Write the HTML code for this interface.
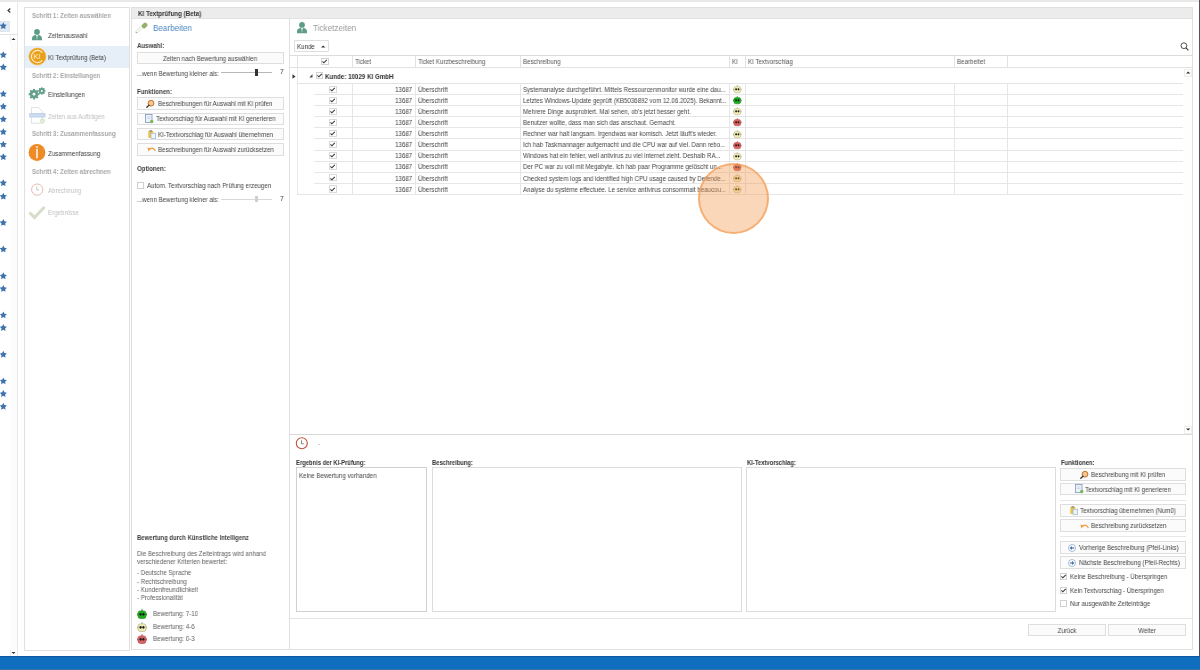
<!DOCTYPE html><html><head><meta charset="utf-8"><style>
html,body{margin:0;padding:0;}
body{width:1200px;height:670px;overflow:hidden;background:#fff;position:relative;font-family:"Liberation Sans",sans-serif;}
.a{position:absolute;}
.t{position:absolute;white-space:nowrap;will-change:transform;}
svg{overflow:visible}
</style></head><body>
<div class="a" style="left:0px;top:0px;width:1200px;height:2px;background:#e8e8e8"></div>
<div class="a" style="left:17px;top:2px;width:1px;height:654px;background:#e8e8e8"></div>
<div class="a" style="left:10px;top:42px;width:7px;height:607px;background:#fcfcfc"></div>
<div class="a" style="left:0px;top:20.5px;width:10px;height:11.5px;background:#e2ebf5;box-shadow:inset 0 0 0 0.5px #d5e0ec"></div>
<svg class="a" style="left:7px;top:8px" width="4" height="5" viewBox="0 0 4 5"><path d="M3.3 0.5 L1 2.5 L3.3 4.5" stroke="#333" stroke-width="1.1" fill="none"/></svg>
<div class="a" style="left:0px;top:34px;width:17px;height:1px;background:#e3e3e3"></div>
<div class="a" style="left:10px;top:35px;width:7px;height:7px;background:#fff;border-left:1px solid #eee;box-sizing:border-box"></div>
<svg class="a" style="left:11px;top:37px" width="5" height="4" viewBox="0 0 5 4"><path d="M0.5 3 L2.5 1 L4.5 3 Z" fill="#333"/></svg>
<div class="a" style="left:10px;top:649px;width:7px;height:7px;background:#fff;border-left:1px solid #eee;box-sizing:border-box"></div>
<svg class="a" style="left:11px;top:651px" width="5" height="4" viewBox="0 0 5 4"><path d="M0.5 1 L2.5 3 L4.5 1 Z" fill="#333"/></svg>
<svg class="a" style="left:0px;top:0px" width="17" height="420" viewBox="0 0 17 420"><polygon points="3.30,22.20 4.42,24.46 6.91,24.83 5.11,26.59 5.53,29.07 3.30,27.90 1.07,29.07 1.49,26.59 -0.31,24.83 2.18,24.46" fill="#3d72ad"/><polygon points="3.30,51.20 4.42,53.46 6.91,53.83 5.11,55.59 5.53,58.07 3.30,56.90 1.07,58.07 1.49,55.59 -0.31,53.83 2.18,53.46" fill="#3d72ad"/><polygon points="3.30,63.50 4.42,65.76 6.91,66.13 5.11,67.89 5.53,70.37 3.30,69.20 1.07,70.37 1.49,67.89 -0.31,66.13 2.18,65.76" fill="#3d72ad"/><polygon points="3.30,90.20 4.42,92.46 6.91,92.83 5.11,94.59 5.53,97.07 3.30,95.90 1.07,97.07 1.49,94.59 -0.31,92.83 2.18,92.46" fill="#3d72ad"/><polygon points="3.30,102.80 4.42,105.06 6.91,105.43 5.11,107.19 5.53,109.67 3.30,108.50 1.07,109.67 1.49,107.19 -0.31,105.43 2.18,105.06" fill="#3d72ad"/><polygon points="3.30,115.50 4.42,117.76 6.91,118.13 5.11,119.89 5.53,122.37 3.30,121.20 1.07,122.37 1.49,119.89 -0.31,118.13 2.18,117.76" fill="#3d72ad"/><polygon points="3.30,128.20 4.42,130.46 6.91,130.83 5.11,132.59 5.53,135.07 3.30,133.90 1.07,135.07 1.49,132.59 -0.31,130.83 2.18,130.46" fill="#3d72ad"/><polygon points="3.30,140.70 4.42,142.96 6.91,143.33 5.11,145.09 5.53,147.57 3.30,146.40 1.07,147.57 1.49,145.09 -0.31,143.33 2.18,142.96" fill="#3d72ad"/><polygon points="3.30,153.20 4.42,155.46 6.91,155.83 5.11,157.59 5.53,160.07 3.30,158.90 1.07,160.07 1.49,157.59 -0.31,155.83 2.18,155.46" fill="#3d72ad"/><polygon points="3.30,179.20 4.42,181.46 6.91,181.83 5.11,183.59 5.53,186.07 3.30,184.90 1.07,186.07 1.49,183.59 -0.31,181.83 2.18,181.46" fill="#3d72ad"/><polygon points="3.30,192.70 4.42,194.96 6.91,195.33 5.11,197.09 5.53,199.57 3.30,198.40 1.07,199.57 1.49,197.09 -0.31,195.33 2.18,194.96" fill="#3d72ad"/><polygon points="3.30,219.00 4.42,221.26 6.91,221.63 5.11,223.39 5.53,225.87 3.30,224.70 1.07,225.87 1.49,223.39 -0.31,221.63 2.18,221.26" fill="#3d72ad"/><polygon points="3.30,245.50 4.42,247.76 6.91,248.13 5.11,249.89 5.53,252.37 3.30,251.20 1.07,252.37 1.49,249.89 -0.31,248.13 2.18,247.76" fill="#3d72ad"/><polygon points="3.30,272.30 4.42,274.56 6.91,274.93 5.11,276.69 5.53,279.17 3.30,278.00 1.07,279.17 1.49,276.69 -0.31,274.93 2.18,274.56" fill="#3d72ad"/><polygon points="3.30,285.00 4.42,287.26 6.91,287.63 5.11,289.39 5.53,291.87 3.30,290.70 1.07,291.87 1.49,289.39 -0.31,287.63 2.18,287.26" fill="#3d72ad"/><polygon points="3.30,311.40 4.42,313.66 6.91,314.03 5.11,315.79 5.53,318.27 3.30,317.10 1.07,318.27 1.49,315.79 -0.31,314.03 2.18,313.66" fill="#3d72ad"/><polygon points="3.30,324.10 4.42,326.36 6.91,326.73 5.11,328.49 5.53,330.97 3.30,329.80 1.07,330.97 1.49,328.49 -0.31,326.73 2.18,326.36" fill="#3d72ad"/><polygon points="3.30,350.80 4.42,353.06 6.91,353.43 5.11,355.19 5.53,357.67 3.30,356.50 1.07,357.67 1.49,355.19 -0.31,353.43 2.18,353.06" fill="#3d72ad"/><polygon points="3.30,377.40 4.42,379.66 6.91,380.03 5.11,381.79 5.53,384.27 3.30,383.10 1.07,384.27 1.49,381.79 -0.31,380.03 2.18,379.66" fill="#3d72ad"/><polygon points="3.30,390.10 4.42,392.36 6.91,392.73 5.11,394.49 5.53,396.97 3.30,395.80 1.07,396.97 1.49,394.49 -0.31,392.73 2.18,392.36" fill="#3d72ad"/><polygon points="3.30,402.80 4.42,405.06 6.91,405.43 5.11,407.19 5.53,409.67 3.30,408.50 1.07,409.67 1.49,407.19 -0.31,405.43 2.18,405.06" fill="#3d72ad"/></svg>
<div class="a" style="left:24px;top:7px;width:106px;height:644px;border:1px solid #e0e0e0;box-sizing:border-box;background:#fff"></div>
<div class="a" style="left:25px;top:46px;width:104px;height:21.5px;background:#e6eff8"></div>
<div class="t" style="left:31.5px;top:11.10px;font-size:6.85px;color:#a6a6a6;line-height:10px;transform-origin:0 50%;transform:scaleX(0.891);font-weight:bold;">Schritt 1: Zeiten auswählen</div>
<div class="t" style="left:48px;top:30.60px;font-size:6.9px;color:#404040;line-height:10px;transform-origin:0 50%;transform:scaleX(0.891);">Zeitenauswahl</div>
<div class="t" style="left:48px;top:52.60px;font-size:6.9px;color:#404040;line-height:10px;transform-origin:0 50%;transform:scaleX(0.891);">KI Textprüfung (Beta)</div>
<div class="t" style="left:31.5px;top:70.60px;font-size:6.85px;color:#a6a6a6;line-height:10px;transform-origin:0 50%;transform:scaleX(0.891);font-weight:bold;">Schritt 2: Einstellungen</div>
<div class="t" style="left:48px;top:89.60px;font-size:6.9px;color:#404040;line-height:10px;transform-origin:0 50%;transform:scaleX(0.891);">Einstellungen</div>
<div class="t" style="left:48px;top:111.60px;font-size:6.9px;color:#c0c0c0;line-height:10px;transform-origin:0 50%;transform:scaleX(0.891);">Zeiten aus Aufträgen</div>
<div class="t" style="left:31.5px;top:129.10px;font-size:6.85px;color:#a6a6a6;line-height:10px;transform-origin:0 50%;transform:scaleX(0.891);font-weight:bold;">Schritt 3: Zusammenfassung</div>
<div class="t" style="left:48px;top:148.60px;font-size:6.9px;color:#404040;line-height:10px;transform-origin:0 50%;transform:scaleX(0.891);">Zusammenfassung</div>
<div class="t" style="left:31.5px;top:166.60px;font-size:6.85px;color:#a6a6a6;line-height:10px;transform-origin:0 50%;transform:scaleX(0.891);font-weight:bold;">Schritt 4: Zeiten abrechnen</div>
<div class="t" style="left:48px;top:185.60px;font-size:6.9px;color:#c0c0c0;line-height:10px;transform-origin:0 50%;transform:scaleX(0.891);">Abrechnung</div>
<div class="t" style="left:48px;top:207.60px;font-size:6.9px;color:#c0c0c0;line-height:10px;transform-origin:0 50%;transform:scaleX(0.891);">Ergebnisse</div>
<svg class="a" style="left:32px;top:29px" width="10" height="12" viewBox="0 0 10 12"><g transform="translate(0,0)"><circle cx="5" cy="2.9" r="2.9" fill="#5e9c89"/><path d="M0 11.2 L0 9.6 C0 7.2 1.8 6.2 3.7 6.0 L5 7.6 L6.3 6.0 C8.2 6.2 10 7.2 10 9.6 L10 11.2 Z" fill="#5e9c89"/><path d="M4.5 7.1 L5 6.6 L5.5 7.1 L5.25 10.2 L4.75 10.2 Z" fill="#cfe6dc"/></g></svg>
<svg class="a" style="left:28px;top:47px" width="19" height="19" viewBox="0 0 19 19"><circle cx="9.4" cy="9.5" r="8.5" fill="#e99e1c" stroke="#f3b84a" stroke-width="0.7"/><path d="M14.2 5.6 A6.1 6.1 0 1 0 14.2 13.4" stroke="#fff0c8" stroke-width="1.15" fill="none"/><text x="9.0" y="12.4" font-size="7.4" font-family="Liberation Sans" fill="#fff0c8" text-anchor="middle">KI</text></svg>
<svg class="a" style="left:28px;top:85px" width="18" height="16" viewBox="0 0 18 16"><circle cx="6" cy="9.2" r="4.134" fill="#64a08c"/><rect x="4.94" y="3.90" width="2.12" height="2.65" fill="#64a08c" transform="rotate(0.0 6 9.2)"/><rect x="4.94" y="3.90" width="2.12" height="2.65" fill="#64a08c" transform="rotate(45.0 6 9.2)"/><rect x="4.94" y="3.90" width="2.12" height="2.65" fill="#64a08c" transform="rotate(90.0 6 9.2)"/><rect x="4.94" y="3.90" width="2.12" height="2.65" fill="#64a08c" transform="rotate(135.0 6 9.2)"/><rect x="4.94" y="3.90" width="2.12" height="2.65" fill="#64a08c" transform="rotate(180.0 6 9.2)"/><rect x="4.94" y="3.90" width="2.12" height="2.65" fill="#64a08c" transform="rotate(225.0 6 9.2)"/><rect x="4.94" y="3.90" width="2.12" height="2.65" fill="#64a08c" transform="rotate(270.0 6 9.2)"/><rect x="4.94" y="3.90" width="2.12" height="2.65" fill="#64a08c" transform="rotate(315.0 6 9.2)"/><circle cx="6" cy="9.2" r="1.378" fill="#fff"/><circle cx="13.8" cy="6" r="2.886" fill="#64a08c"/><rect x="13.06" y="2.30" width="1.48" height="1.85" fill="#64a08c" transform="rotate(0.0 13.8 6)"/><rect x="13.06" y="2.30" width="1.48" height="1.85" fill="#64a08c" transform="rotate(45.0 13.8 6)"/><rect x="13.06" y="2.30" width="1.48" height="1.85" fill="#64a08c" transform="rotate(90.0 13.8 6)"/><rect x="13.06" y="2.30" width="1.48" height="1.85" fill="#64a08c" transform="rotate(135.0 13.8 6)"/><rect x="13.06" y="2.30" width="1.48" height="1.85" fill="#64a08c" transform="rotate(180.0 13.8 6)"/><rect x="13.06" y="2.30" width="1.48" height="1.85" fill="#64a08c" transform="rotate(225.0 13.8 6)"/><rect x="13.06" y="2.30" width="1.48" height="1.85" fill="#64a08c" transform="rotate(270.0 13.8 6)"/><rect x="13.06" y="2.30" width="1.48" height="1.85" fill="#64a08c" transform="rotate(315.0 13.8 6)"/><circle cx="13.8" cy="6" r="0.9620000000000001" fill="#fff"/></svg>
<svg class="a" style="left:29px;top:107px" width="17" height="17" viewBox="0 0 17 17"><path d="M2.5 0.5 H9.5 L13.5 4.5 V16.2 H2.5 Z" fill="#fff" stroke="#d6d6d6" stroke-width="0.7"/><rect x="0.2" y="6" width="16.3" height="4.5" fill="#c2d3ec"/><path d="M1.5 8.2 H15" stroke="#e9f0fa" stroke-width="0.8" stroke-dasharray="1.6 0.6"/><circle cx="13.5" cy="14" r="2.4" fill="#d3e6c6"/><path d="M12.3 14 H14.7 M13.5 12.8 V15.2" stroke="#f4faf0" stroke-width="0.6"/></svg>
<svg class="a" style="left:28px;top:144px" width="18" height="18" viewBox="0 0 18 18"><circle cx="9" cy="8.5" r="8.4" fill="#ee8b26"/><rect x="8.3" y="4.8" width="1.4" height="9.5" fill="#fff"/><rect x="8.2" y="2.2" width="1.6" height="1.6" fill="#fff"/></svg>
<svg class="a" style="left:30px;top:183px" width="14" height="14" viewBox="0 0 14 14"><circle cx="7.2" cy="6.6" r="5.6" fill="none" stroke="#e9b8b0" stroke-width="1"/><path d="M6.8 3.5 V7 H9" stroke="#b8b8b8" stroke-width="0.8" fill="none"/></svg>
<svg class="a" style="left:28px;top:205px" width="18" height="15" viewBox="0 0 18 15"><path d="M1.5 7.5 L6.5 12.5 L16.5 2" stroke="#d6ddc9" stroke-width="3" fill="none"/></svg>
<div class="a" style="left:131px;top:7px;width:1062px;height:643px;border:1px solid #e0e0e0;box-sizing:border-box;background:#fff"></div>
<div class="a" style="left:132px;top:8px;width:1060px;height:10.5px;background:#ececec;border-bottom:1px solid #e2e2e2;box-sizing:border-box"></div>
<div class="t" style="left:138px;top:9.10px;font-size:7.01px;color:#333;line-height:10px;transform-origin:0 50%;transform:scaleX(0.891);font-weight:bold;">KI Textprüfung (Beta)</div>
<div class="a" style="left:289px;top:18.5px;width:1px;height:631px;background:#e0e0e0"></div>
<svg class="a" style="left:135px;top:21px" width="13" height="13" viewBox="0 0 13 13"><path d="M1.8 11.0 L7.2 5.8" stroke="#cdd6c2" stroke-width="2.8" stroke-linecap="round"/><path d="M1.8 11.0 L7.2 5.8" stroke="#fff" stroke-width="1.6" stroke-linecap="round"/><circle cx="1.3" cy="11.5" r="0.55" fill="#8aa070"/><rect x="-2.9" y="-2.2" width="5.8" height="4.4" rx="1.6" transform="translate(9.6 4.5) rotate(-45)" fill="#93b06f"/></svg>
<div class="t" style="left:153px;top:23.10px;font-size:9.09px;color:#4a86c1;line-height:10px;transform-origin:0 50%;transform:scaleX(0.891);">Bearbeiten</div>
<div class="t" style="left:137.3px;top:41.30px;font-size:6.85px;color:#404040;line-height:10px;transform-origin:0 50%;transform:scaleX(0.891);font-weight:bold;">Auswahl:</div>
<div class="a" style="left:137.3px;top:52px;width:146.3px;height:12.299999999999997px;border:1px solid #dedede;box-sizing:border-box;background:#fbfbfb"></div>
<div class="t" style="left:210.45px;top:54.00px;font-size:6.9px;color:#444;line-height:10px;transform-origin:0 50%;transform:scaleX(0.891) translateX(-50%);">Zeiten nach Bewertung auswählen</div>
<div class="t" style="left:137.3px;top:68.90px;font-size:6.9px;color:#444;line-height:10px;transform-origin:0 50%;transform:scaleX(0.891);">...wenn Bewertung kleiner als:</div>
<div class="a" style="left:220.7px;top:72.3px;width:51.5px;height:0.8px;background:#b8b8b8"></div>
<div class="a" style="left:254.7px;top:69.4px;width:3px;height:6.3px;background:#333"></div>
<div class="t" style="left:280.4px;top:67.30px;font-size:6.9px;color:#444;line-height:10px;transform-origin:0 50%;transform:scaleX(0.891);">7</div>
<div class="t" style="left:137.3px;top:86.60px;font-size:6.85px;color:#404040;line-height:10px;transform-origin:0 50%;transform:scaleX(0.891);font-weight:bold;">Funktionen:</div>
<div class="a" style="left:137.3px;top:97px;width:146.3px;height:12.5px;border:1px solid #dedede;box-sizing:border-box;background:#fbfbfb"></div>
<div class="t" style="left:157.7px;top:98.90px;font-size:6.9px;color:#444;line-height:10px;transform-origin:0 50%;transform:scaleX(0.891);">Beschreibungen für Auswahl mit KI prüfen</div>
<div class="a" style="left:137.3px;top:112.5px;width:146.3px;height:12.5px;border:1px solid #dedede;box-sizing:border-box;background:#fbfbfb"></div>
<div class="t" style="left:155.7px;top:114.40px;font-size:6.9px;color:#444;line-height:10px;transform-origin:0 50%;transform:scaleX(0.891);">Textvorschlag für Auswahl mit KI generieren</div>
<div class="a" style="left:137.3px;top:127.8px;width:146.3px;height:12.600000000000009px;border:1px solid #dedede;box-sizing:border-box;background:#fbfbfb"></div>
<div class="t" style="left:157.6px;top:129.70px;font-size:6.9px;color:#444;line-height:10px;transform-origin:0 50%;transform:scaleX(0.891);">KI-Textvorschlag für Auswahl übernehmen</div>
<div class="a" style="left:137.3px;top:143.2px;width:146.3px;height:12.400000000000006px;border:1px solid #dedede;box-sizing:border-box;background:#fbfbfb"></div>
<div class="t" style="left:157.6px;top:145.00px;font-size:6.9px;color:#444;line-height:10px;transform-origin:0 50%;transform:scaleX(0.891);">Beschreibungen für Auswahl zurücksetzen</div>
<svg class="a" style="left:146px;top:99.5px" width="9" height="8" viewBox="0 0 9 8"><g transform="translate(0,0)"><circle cx="5" cy="3.2" r="2.9" fill="#f7c58f" stroke="#b86a20" stroke-width="0.9"/><path d="M3 5.2 L0.8 7.2" stroke="#333" stroke-width="1.3" stroke-linecap="round"/></g></svg>
<svg class="a" style="left:145px;top:114px" width="9" height="10" viewBox="0 0 9 10"><g transform="translate(0,0)"><rect x="0.5" y="0.5" width="6.5" height="8" fill="#eef3fa" stroke="#7d97c0" stroke-width="0.8"/><path d="M2 3 H5.5 M2 4.5 H5.5" stroke="#b8c6dc" stroke-width="0.6"/><circle cx="6.7" cy="7.5" r="1.7" fill="#7cb65a"/></g></svg>
<svg class="a" style="left:147.5px;top:129.8px" width="9" height="9" viewBox="0 0 9 9"><g transform="translate(0,0)"><rect x="0.3" y="1" width="5" height="7" fill="#e9c44a"/><rect x="1.5" y="0.2" width="2.6" height="1.5" fill="#8d8d8d"/><rect x="3" y="3.2" width="4.7" height="5.3" fill="#eef4fb" stroke="#8eaad0" stroke-width="0.6"/></g></svg>
<svg class="a" style="left:147px;top:146.3px" width="9" height="6" viewBox="0 0 9 6"><g transform="translate(0,0)"><path d="M8.3 5.2 C7.6 2.0 4.6 1.4 2.6 3.2" stroke="#ef9c45" stroke-width="1.3" fill="none"/><path d="M0.4 1.6 L4.0 2.6 L1.4 5.4 Z" fill="#ef9c45"/></g></svg>
<div class="t" style="left:137.3px;top:163.60px;font-size:6.85px;color:#404040;line-height:10px;transform-origin:0 50%;transform:scaleX(0.891);font-weight:bold;">Optionen:</div>
<div class="a" style="left:137.2px;top:182.4px;width:7.3px;height:6.6px;border:1px solid #cfcfcf;box-sizing:border-box;background:#fff"></div>
<div class="t" style="left:146.7px;top:181.40px;font-size:6.9px;color:#444;line-height:10px;transform-origin:0 50%;transform:scaleX(0.891);">Autom. Textvorschlag nach Prüfung erzeugen</div>
<div class="t" style="left:137.3px;top:195.20px;font-size:6.9px;color:#444;line-height:10px;transform-origin:0 50%;transform:scaleX(0.891);">...wenn Bewertung kleiner als:</div>
<div class="a" style="left:220.7px;top:198.8px;width:51.5px;height:0.8px;background:#d8d8d8"></div>
<div class="a" style="left:254.7px;top:196px;width:3px;height:6.3px;background:#cfcfcf"></div>
<div class="t" style="left:280.4px;top:193.60px;font-size:6.9px;color:#444;line-height:10px;transform-origin:0 50%;transform:scaleX(0.891);">7</div>
<div class="t" style="left:137.2px;top:532.80px;font-size:6.68px;color:#404040;line-height:10px;transform-origin:0 50%;transform:scaleX(0.891);font-weight:bold;">Bewertung durch Künstliche Intelligenz</div>
<div class="t" style="left:137.2px;top:549.10px;font-size:6.9px;color:#606060;line-height:10px;transform-origin:0 50%;transform:scaleX(0.891);">Die Beschreibung des Zeiteintrags wird anhand</div>
<div class="t" style="left:137.2px;top:557.30px;font-size:6.9px;color:#606060;line-height:10px;transform-origin:0 50%;transform:scaleX(0.891);">verschiedener Kriterien bewertet:</div>
<div class="t" style="left:137.2px;top:568.20px;font-size:6.9px;color:#606060;line-height:10px;transform-origin:0 50%;transform:scaleX(0.891);">- Deutsche Sprache</div>
<div class="t" style="left:137.2px;top:576.60px;font-size:6.9px;color:#606060;line-height:10px;transform-origin:0 50%;transform:scaleX(0.891);">- Rechtschreibung</div>
<div class="t" style="left:137.2px;top:585.00px;font-size:6.9px;color:#606060;line-height:10px;transform-origin:0 50%;transform:scaleX(0.891);">- Kundenfreundlichkeit</div>
<div class="t" style="left:137.2px;top:593.30px;font-size:6.9px;color:#606060;line-height:10px;transform-origin:0 50%;transform:scaleX(0.891);">- Professionalität</div>
<svg class="a" style="left:137.3px;top:609px" width="10" height="10" viewBox="0 0 10 10"><g transform="translate(0,0)"><path d="M5 0.2 V2" stroke="#138013" stroke-width="0.9"/><rect x="0.2" y="4.2" width="1.2" height="2.4" rx="0.5" fill="#138013"/><rect x="8.6" y="4.2" width="1.2" height="2.4" rx="0.5" fill="#138013"/><rect x="1.1" y="1.9" width="7.8" height="7.6" rx="2.2" fill="#1fae1f" stroke="#138013" stroke-width="0.6"/><ellipse cx="3.6" cy="5.3" rx="1.1" ry="1.4" fill="#1a1a1a"/><ellipse cx="6.4" cy="5.3" rx="1.1" ry="1.4" fill="#1a1a1a"/></g></svg>
<svg class="a" style="left:137.3px;top:621.6px" width="10" height="10" viewBox="0 0 10 10"><g transform="translate(0,0)"><path d="M5 0.2 V2" stroke="#aaa680" stroke-width="0.9"/><rect x="0.2" y="4.2" width="1.2" height="2.4" rx="0.5" fill="#aaa680"/><rect x="8.6" y="4.2" width="1.2" height="2.4" rx="0.5" fill="#aaa680"/><rect x="1.1" y="1.9" width="7.8" height="7.6" rx="2.2" fill="#f1efb6" stroke="#aaa680" stroke-width="0.6"/><ellipse cx="3.6" cy="5.3" rx="1.1" ry="1.4" fill="#1a1a1a"/><ellipse cx="6.4" cy="5.3" rx="1.1" ry="1.4" fill="#1a1a1a"/></g></svg>
<svg class="a" style="left:137.3px;top:634px" width="10" height="10" viewBox="0 0 10 10"><g transform="translate(0,0)"><path d="M5 0.2 V2" stroke="#a84444" stroke-width="0.9"/><rect x="0.2" y="4.2" width="1.2" height="2.4" rx="0.5" fill="#a84444"/><rect x="8.6" y="4.2" width="1.2" height="2.4" rx="0.5" fill="#a84444"/><rect x="1.1" y="1.9" width="7.8" height="7.6" rx="2.2" fill="#de6262" stroke="#a84444" stroke-width="0.6"/><ellipse cx="3.6" cy="5.3" rx="1.1" ry="1.4" fill="#1a1a1a"/><ellipse cx="6.4" cy="5.3" rx="1.1" ry="1.4" fill="#1a1a1a"/></g></svg>
<div class="t" style="left:152.9px;top:609.20px;font-size:6.9px;color:#606060;line-height:10px;transform-origin:0 50%;transform:scaleX(0.891);">Bewertung: 7-10</div>
<div class="t" style="left:152.9px;top:621.80px;font-size:6.9px;color:#606060;line-height:10px;transform-origin:0 50%;transform:scaleX(0.891);">Bewertung: 4-6</div>
<div class="t" style="left:152.9px;top:634.10px;font-size:6.9px;color:#606060;line-height:10px;transform-origin:0 50%;transform:scaleX(0.891);">Bewertung: 0-3</div>
<svg class="a" style="left:297px;top:21.5px" width="10" height="12" viewBox="0 0 10 12"><g transform="translate(0,0)"><circle cx="5" cy="2.9" r="2.9" fill="#5e9c89"/><path d="M0 11.2 L0 9.6 C0 7.2 1.8 6.2 3.7 6.0 L5 7.6 L6.3 6.0 C8.2 6.2 10 7.2 10 9.6 L10 11.2 Z" fill="#5e9c89"/><path d="M4.5 7.1 L5 6.6 L5.5 7.1 L5.25 10.2 L4.75 10.2 Z" fill="#cfe6dc"/></g></svg>
<div class="t" style="left:312.5px;top:23.40px;font-size:9.15px;color:#9a9a9a;line-height:10px;transform-origin:0 50%;transform:scaleX(0.891);">Ticketzeiten</div>
<div class="a" style="left:293.7px;top:40.2px;width:35px;height:11.4px;border:1px solid #dedede;box-sizing:border-box;background:#fff;border-radius:1px"></div>
<div class="t" style="left:296.5px;top:41.60px;font-size:6.9px;color:#333;line-height:10px;transform-origin:0 50%;transform:scaleX(0.891);">Kunde</div>
<svg class="a" style="left:321px;top:44.5px" width="5" height="3" viewBox="0 0 5 3"><path d="M0 2.6 L2.2 0.4 L4.4 2.6 Z" fill="#333"/></svg>
<svg class="a" style="left:1179.5px;top:41.5px" width="10" height="10" viewBox="0 0 10 10"><circle cx="3.9" cy="3.7" r="2.9" stroke="#3a3a3a" stroke-width="0.9" fill="none"/><path d="M6 5.9 L8.4 8.3" stroke="#3a3a3a" stroke-width="1.1"/></svg>
<div class="a" style="left:289.5px;top:55px;width:903px;height:1px;background:#dcdcdc"></div>
<div class="a" style="left:289.5px;top:67px;width:903px;height:1px;background:#e2e2e2"></div>
<div class="a" style="left:297.3px;top:56px;width:1px;height:11px;background:#e2e2e2"></div>
<div class="a" style="left:352.2px;top:56px;width:1px;height:11px;background:#e2e2e2"></div>
<div class="a" style="left:415.2px;top:56px;width:1px;height:11px;background:#e2e2e2"></div>
<div class="a" style="left:520.4px;top:56px;width:1px;height:11px;background:#e2e2e2"></div>
<div class="a" style="left:729.4px;top:56px;width:1px;height:11px;background:#e2e2e2"></div>
<div class="a" style="left:745.3px;top:56px;width:1px;height:11px;background:#e2e2e2"></div>
<div class="a" style="left:954.3px;top:56px;width:1px;height:11px;background:#e2e2e2"></div>
<div class="a" style="left:1007.3px;top:56px;width:1px;height:11px;background:#e2e2e2"></div>
<div class="a" style="left:321.4px;top:58px;width:7.3px;height:7px;border:1px solid #d2d2d2;box-sizing:border-box;background:#fff"></div>
<svg class="a" style="left:321.4px;top:58px" width="7.3" height="7" viewBox="0 0 7.3 7"><path d="M1.4 3.4 L2.9 4.8 L5.8 1.8" stroke="#3a3a3a" stroke-width="1.1" fill="none"/></svg>
<div class="t" style="left:355px;top:57.30px;font-size:6.9px;color:#555;line-height:10px;transform-origin:0 50%;transform:scaleX(0.891);">Ticket</div>
<div class="t" style="left:418px;top:57.30px;font-size:6.9px;color:#555;line-height:10px;transform-origin:0 50%;transform:scaleX(0.891);">Ticket Kurzbeschreibung</div>
<div class="t" style="left:522.7px;top:57.30px;font-size:6.9px;color:#555;line-height:10px;transform-origin:0 50%;transform:scaleX(0.891);">Beschreibung</div>
<div class="t" style="left:732px;top:57.30px;font-size:6.9px;color:#555;line-height:10px;transform-origin:0 50%;transform:scaleX(0.891);">KI</div>
<div class="t" style="left:747.5px;top:57.30px;font-size:6.9px;color:#555;line-height:10px;transform-origin:0 50%;transform:scaleX(0.891);">KI Textvorschlag</div>
<div class="t" style="left:957px;top:57.30px;font-size:6.9px;color:#555;line-height:10px;transform-origin:0 50%;transform:scaleX(0.891);">Bearbeitet</div>
<div class="a" style="left:297.3px;top:68px;width:1px;height:127px;background:#e8e8e8"></div>
<svg class="a" style="left:291.5px;top:73.5px" width="4" height="5" viewBox="0 0 4 5"><path d="M0.5 0.3 L3.5 2.5 L0.5 4.7 Z" fill="#333"/></svg>
<svg class="a" style="left:308.5px;top:74px" width="4" height="4" viewBox="0 0 4 4"><path d="M3.5 0.3 V3.5 H0.3 Z" fill="#444"/></svg>
<div class="a" style="left:315.5px;top:72px;width:7.2px;height:7px;border:1px solid #d2d2d2;box-sizing:border-box;background:#fff"></div>
<svg class="a" style="left:315.5px;top:72px" width="7.2" height="7" viewBox="0 0 7.2 7"><path d="M1.4 3.4 L2.9 4.8 L5.8 1.8" stroke="#3a3a3a" stroke-width="1.1" fill="none"/></svg>
<div class="t" style="left:325px;top:71.80px;font-size:6.96px;color:#303030;line-height:10px;transform-origin:0 50%;transform:scaleX(0.891);font-weight:bold;">Kunde: 10029 KI GmbH</div>
<div class="a" style="left:297.3px;top:83px;width:886px;height:1px;background:#e4e4e4"></div>
<div class="a" style="left:313.7px;top:94.0px;width:869.8px;height:1px;background:#e6e6e6"></div>
<div class="a" style="left:329.3px;top:85.5px;width:7.5px;height:7.2px;border:1px solid #d9d9d9;border-radius:0.5px;box-sizing:border-box;background:#fff"></div>
<svg class="a" style="left:329.3px;top:85.7px" width="7.5" height="7.2" viewBox="0 0 7.5 7.2"><path d="M1.4 3.4 L2.9 4.8 L5.8 1.8" stroke="#3a3a3a" stroke-width="1.1" fill="none"/></svg>
<div class="t" style="right:787.4px;top:84.75px;font-size:6.9px;color:#444;line-height:10px;transform-origin:100% 50%;transform:scaleX(0.891);">13687</div>
<div class="t" style="left:418px;top:84.75px;font-size:6.9px;color:#444;line-height:10px;transform-origin:0 50%;transform:scaleX(0.891);">Überschrift</div>
<div class="t" style="left:522.7px;top:84.75px;font-size:6.9px;color:#444;line-height:10px;transform-origin:0 50%;transform:scaleX(0.891);">Systemanalyse durchgeführt. Mittels Ressourcenmonitor wurde eine dau...</div>
<svg class="a" style="left:733px;top:85.10px" width="8.6" height="8.2" viewBox="0 0 10 10" preserveAspectRatio="none"><g transform="translate(0,0)"><path d="M5 0.2 V2" stroke="#aaa680" stroke-width="0.9"/><rect x="0.2" y="4.2" width="1.2" height="2.4" rx="0.5" fill="#aaa680"/><rect x="8.6" y="4.2" width="1.2" height="2.4" rx="0.5" fill="#aaa680"/><rect x="1.1" y="1.9" width="7.8" height="7.6" rx="2.2" fill="#f1efb6" stroke="#aaa680" stroke-width="0.6"/><ellipse cx="3.6" cy="5.3" rx="1.1" ry="1.4" fill="#1a1a1a"/><ellipse cx="6.4" cy="5.3" rx="1.1" ry="1.4" fill="#1a1a1a"/></g></svg>
<div class="a" style="left:313.7px;top:105.1px;width:869.8px;height:1px;background:#e6e6e6"></div>
<div class="a" style="left:329.3px;top:96.6px;width:7.5px;height:7.2px;border:1px solid #d9d9d9;border-radius:0.5px;box-sizing:border-box;background:#fff"></div>
<svg class="a" style="left:329.3px;top:96.8px" width="7.5" height="7.2" viewBox="0 0 7.5 7.2"><path d="M1.4 3.4 L2.9 4.8 L5.8 1.8" stroke="#3a3a3a" stroke-width="1.1" fill="none"/></svg>
<div class="t" style="right:787.4px;top:95.85px;font-size:6.9px;color:#444;line-height:10px;transform-origin:100% 50%;transform:scaleX(0.891);">13687</div>
<div class="t" style="left:418px;top:95.85px;font-size:6.9px;color:#444;line-height:10px;transform-origin:0 50%;transform:scaleX(0.891);">Überschrift</div>
<div class="t" style="left:522.7px;top:95.85px;font-size:6.9px;color:#444;line-height:10px;transform-origin:0 50%;transform:scaleX(0.891);">Letztes Windows-Update geprüft (KB5036892 vom 12.06.2025). Bekannt...</div>
<svg class="a" style="left:733px;top:96.20px" width="8.6" height="8.2" viewBox="0 0 10 10" preserveAspectRatio="none"><g transform="translate(0,0)"><path d="M5 0.2 V2" stroke="#138013" stroke-width="0.9"/><rect x="0.2" y="4.2" width="1.2" height="2.4" rx="0.5" fill="#138013"/><rect x="8.6" y="4.2" width="1.2" height="2.4" rx="0.5" fill="#138013"/><rect x="1.1" y="1.9" width="7.8" height="7.6" rx="2.2" fill="#1fae1f" stroke="#138013" stroke-width="0.6"/><ellipse cx="3.6" cy="5.3" rx="1.1" ry="1.4" fill="#1a1a1a"/><ellipse cx="6.4" cy="5.3" rx="1.1" ry="1.4" fill="#1a1a1a"/></g></svg>
<div class="a" style="left:313.7px;top:116.2px;width:869.8px;height:1px;background:#e6e6e6"></div>
<div class="a" style="left:329.3px;top:107.7px;width:7.5px;height:7.2px;border:1px solid #d9d9d9;border-radius:0.5px;box-sizing:border-box;background:#fff"></div>
<svg class="a" style="left:329.3px;top:107.9px" width="7.5" height="7.2" viewBox="0 0 7.5 7.2"><path d="M1.4 3.4 L2.9 4.8 L5.8 1.8" stroke="#3a3a3a" stroke-width="1.1" fill="none"/></svg>
<div class="t" style="right:787.4px;top:106.95px;font-size:6.9px;color:#444;line-height:10px;transform-origin:100% 50%;transform:scaleX(0.891);">13687</div>
<div class="t" style="left:418px;top:106.95px;font-size:6.9px;color:#444;line-height:10px;transform-origin:0 50%;transform:scaleX(0.891);">Überschrift</div>
<div class="t" style="left:522.7px;top:106.95px;font-size:6.9px;color:#444;line-height:10px;transform-origin:0 50%;transform:scaleX(0.891);">Mehrere Dinge ausprobiert. Mal sehen, ob's jetzt besser geht.</div>
<svg class="a" style="left:733px;top:107.30px" width="8.6" height="8.2" viewBox="0 0 10 10" preserveAspectRatio="none"><g transform="translate(0,0)"><path d="M5 0.2 V2" stroke="#aaa680" stroke-width="0.9"/><rect x="0.2" y="4.2" width="1.2" height="2.4" rx="0.5" fill="#aaa680"/><rect x="8.6" y="4.2" width="1.2" height="2.4" rx="0.5" fill="#aaa680"/><rect x="1.1" y="1.9" width="7.8" height="7.6" rx="2.2" fill="#f1efb6" stroke="#aaa680" stroke-width="0.6"/><ellipse cx="3.6" cy="5.3" rx="1.1" ry="1.4" fill="#1a1a1a"/><ellipse cx="6.4" cy="5.3" rx="1.1" ry="1.4" fill="#1a1a1a"/></g></svg>
<div class="a" style="left:313.7px;top:127.3px;width:869.8px;height:1px;background:#e6e6e6"></div>
<div class="a" style="left:329.3px;top:118.8px;width:7.5px;height:7.2px;border:1px solid #d9d9d9;border-radius:0.5px;box-sizing:border-box;background:#fff"></div>
<svg class="a" style="left:329.3px;top:119.0px" width="7.5" height="7.2" viewBox="0 0 7.5 7.2"><path d="M1.4 3.4 L2.9 4.8 L5.8 1.8" stroke="#3a3a3a" stroke-width="1.1" fill="none"/></svg>
<div class="t" style="right:787.4px;top:118.05px;font-size:6.9px;color:#444;line-height:10px;transform-origin:100% 50%;transform:scaleX(0.891);">13687</div>
<div class="t" style="left:418px;top:118.05px;font-size:6.9px;color:#444;line-height:10px;transform-origin:0 50%;transform:scaleX(0.891);">Überschrift</div>
<div class="t" style="left:522.7px;top:118.05px;font-size:6.9px;color:#444;line-height:10px;transform-origin:0 50%;transform:scaleX(0.891);">Benutzer wollte, dass man sich das anschaut. Gemacht.</div>
<svg class="a" style="left:733px;top:118.40px" width="8.6" height="8.2" viewBox="0 0 10 10" preserveAspectRatio="none"><g transform="translate(0,0)"><path d="M5 0.2 V2" stroke="#a84444" stroke-width="0.9"/><rect x="0.2" y="4.2" width="1.2" height="2.4" rx="0.5" fill="#a84444"/><rect x="8.6" y="4.2" width="1.2" height="2.4" rx="0.5" fill="#a84444"/><rect x="1.1" y="1.9" width="7.8" height="7.6" rx="2.2" fill="#de6262" stroke="#a84444" stroke-width="0.6"/><ellipse cx="3.6" cy="5.3" rx="1.1" ry="1.4" fill="#1a1a1a"/><ellipse cx="6.4" cy="5.3" rx="1.1" ry="1.4" fill="#1a1a1a"/></g></svg>
<div class="a" style="left:313.7px;top:138.4px;width:869.8px;height:1px;background:#e6e6e6"></div>
<div class="a" style="left:329.3px;top:129.9px;width:7.5px;height:7.2px;border:1px solid #d9d9d9;border-radius:0.5px;box-sizing:border-box;background:#fff"></div>
<svg class="a" style="left:329.3px;top:130.10000000000002px" width="7.5" height="7.2" viewBox="0 0 7.5 7.2"><path d="M1.4 3.4 L2.9 4.8 L5.8 1.8" stroke="#3a3a3a" stroke-width="1.1" fill="none"/></svg>
<div class="t" style="right:787.4px;top:129.15px;font-size:6.9px;color:#444;line-height:10px;transform-origin:100% 50%;transform:scaleX(0.891);">13687</div>
<div class="t" style="left:418px;top:129.15px;font-size:6.9px;color:#444;line-height:10px;transform-origin:0 50%;transform:scaleX(0.891);">Überschrift</div>
<div class="t" style="left:522.7px;top:129.15px;font-size:6.9px;color:#444;line-height:10px;transform-origin:0 50%;transform:scaleX(0.891);">Rechner war halt langsam. Irgendwas war komisch. Jetzt läuft's wieder.</div>
<svg class="a" style="left:733px;top:129.50px" width="8.6" height="8.2" viewBox="0 0 10 10" preserveAspectRatio="none"><g transform="translate(0,0)"><path d="M5 0.2 V2" stroke="#aaa680" stroke-width="0.9"/><rect x="0.2" y="4.2" width="1.2" height="2.4" rx="0.5" fill="#aaa680"/><rect x="8.6" y="4.2" width="1.2" height="2.4" rx="0.5" fill="#aaa680"/><rect x="1.1" y="1.9" width="7.8" height="7.6" rx="2.2" fill="#f1efb6" stroke="#aaa680" stroke-width="0.6"/><ellipse cx="3.6" cy="5.3" rx="1.1" ry="1.4" fill="#1a1a1a"/><ellipse cx="6.4" cy="5.3" rx="1.1" ry="1.4" fill="#1a1a1a"/></g></svg>
<div class="a" style="left:313.7px;top:149.5px;width:869.8px;height:1px;background:#e6e6e6"></div>
<div class="a" style="left:329.3px;top:141.0px;width:7.5px;height:7.2px;border:1px solid #d9d9d9;border-radius:0.5px;box-sizing:border-box;background:#fff"></div>
<svg class="a" style="left:329.3px;top:141.20000000000002px" width="7.5" height="7.2" viewBox="0 0 7.5 7.2"><path d="M1.4 3.4 L2.9 4.8 L5.8 1.8" stroke="#3a3a3a" stroke-width="1.1" fill="none"/></svg>
<div class="t" style="right:787.4px;top:140.25px;font-size:6.9px;color:#444;line-height:10px;transform-origin:100% 50%;transform:scaleX(0.891);">13687</div>
<div class="t" style="left:418px;top:140.25px;font-size:6.9px;color:#444;line-height:10px;transform-origin:0 50%;transform:scaleX(0.891);">Überschrift</div>
<div class="t" style="left:522.7px;top:140.25px;font-size:6.9px;color:#444;line-height:10px;transform-origin:0 50%;transform:scaleX(0.891);">Ich hab Taskmannager aufgemacht und die CPU war auf viel. Dann rebo...</div>
<svg class="a" style="left:733px;top:140.60px" width="8.6" height="8.2" viewBox="0 0 10 10" preserveAspectRatio="none"><g transform="translate(0,0)"><path d="M5 0.2 V2" stroke="#a84444" stroke-width="0.9"/><rect x="0.2" y="4.2" width="1.2" height="2.4" rx="0.5" fill="#a84444"/><rect x="8.6" y="4.2" width="1.2" height="2.4" rx="0.5" fill="#a84444"/><rect x="1.1" y="1.9" width="7.8" height="7.6" rx="2.2" fill="#de6262" stroke="#a84444" stroke-width="0.6"/><ellipse cx="3.6" cy="5.3" rx="1.1" ry="1.4" fill="#1a1a1a"/><ellipse cx="6.4" cy="5.3" rx="1.1" ry="1.4" fill="#1a1a1a"/></g></svg>
<div class="a" style="left:313.7px;top:160.6px;width:869.8px;height:1px;background:#e6e6e6"></div>
<div class="a" style="left:329.3px;top:152.1px;width:7.5px;height:7.2px;border:1px solid #d9d9d9;border-radius:0.5px;box-sizing:border-box;background:#fff"></div>
<svg class="a" style="left:329.3px;top:152.3px" width="7.5" height="7.2" viewBox="0 0 7.5 7.2"><path d="M1.4 3.4 L2.9 4.8 L5.8 1.8" stroke="#3a3a3a" stroke-width="1.1" fill="none"/></svg>
<div class="t" style="right:787.4px;top:151.35px;font-size:6.9px;color:#444;line-height:10px;transform-origin:100% 50%;transform:scaleX(0.891);">13687</div>
<div class="t" style="left:418px;top:151.35px;font-size:6.9px;color:#444;line-height:10px;transform-origin:0 50%;transform:scaleX(0.891);">Überschrift</div>
<div class="t" style="left:522.7px;top:151.35px;font-size:6.9px;color:#444;line-height:10px;transform-origin:0 50%;transform:scaleX(0.891);">Windows hat ein fehler, weil antivirus zu viel internet zieht. Deshalb RA...</div>
<svg class="a" style="left:733px;top:151.70px" width="8.6" height="8.2" viewBox="0 0 10 10" preserveAspectRatio="none"><g transform="translate(0,0)"><path d="M5 0.2 V2" stroke="#aaa680" stroke-width="0.9"/><rect x="0.2" y="4.2" width="1.2" height="2.4" rx="0.5" fill="#aaa680"/><rect x="8.6" y="4.2" width="1.2" height="2.4" rx="0.5" fill="#aaa680"/><rect x="1.1" y="1.9" width="7.8" height="7.6" rx="2.2" fill="#f1efb6" stroke="#aaa680" stroke-width="0.6"/><ellipse cx="3.6" cy="5.3" rx="1.1" ry="1.4" fill="#1a1a1a"/><ellipse cx="6.4" cy="5.3" rx="1.1" ry="1.4" fill="#1a1a1a"/></g></svg>
<div class="a" style="left:313.7px;top:171.7px;width:869.8px;height:1px;background:#e6e6e6"></div>
<div class="a" style="left:329.3px;top:163.20000000000002px;width:7.5px;height:7.2px;border:1px solid #d9d9d9;border-radius:0.5px;box-sizing:border-box;background:#fff"></div>
<svg class="a" style="left:329.3px;top:163.40000000000003px" width="7.5" height="7.2" viewBox="0 0 7.5 7.2"><path d="M1.4 3.4 L2.9 4.8 L5.8 1.8" stroke="#3a3a3a" stroke-width="1.1" fill="none"/></svg>
<div class="t" style="right:787.4px;top:162.45px;font-size:6.9px;color:#444;line-height:10px;transform-origin:100% 50%;transform:scaleX(0.891);">13687</div>
<div class="t" style="left:418px;top:162.45px;font-size:6.9px;color:#444;line-height:10px;transform-origin:0 50%;transform:scaleX(0.891);">Überschrift</div>
<div class="t" style="left:522.7px;top:162.45px;font-size:6.9px;color:#444;line-height:10px;transform-origin:0 50%;transform:scaleX(0.891);">Der PC war zu voll mit Megabyte. Ich hab paar Programme gelöscht un...</div>
<svg class="a" style="left:733px;top:162.80px" width="8.6" height="8.2" viewBox="0 0 10 10" preserveAspectRatio="none"><g transform="translate(0,0)"><path d="M5 0.2 V2" stroke="#a84444" stroke-width="0.9"/><rect x="0.2" y="4.2" width="1.2" height="2.4" rx="0.5" fill="#a84444"/><rect x="8.6" y="4.2" width="1.2" height="2.4" rx="0.5" fill="#a84444"/><rect x="1.1" y="1.9" width="7.8" height="7.6" rx="2.2" fill="#de6262" stroke="#a84444" stroke-width="0.6"/><ellipse cx="3.6" cy="5.3" rx="1.1" ry="1.4" fill="#1a1a1a"/><ellipse cx="6.4" cy="5.3" rx="1.1" ry="1.4" fill="#1a1a1a"/></g></svg>
<div class="a" style="left:313.7px;top:182.8px;width:869.8px;height:1px;background:#e6e6e6"></div>
<div class="a" style="left:329.3px;top:174.29999999999998px;width:7.5px;height:7.2px;border:1px solid #d9d9d9;border-radius:0.5px;box-sizing:border-box;background:#fff"></div>
<svg class="a" style="left:329.3px;top:174.5px" width="7.5" height="7.2" viewBox="0 0 7.5 7.2"><path d="M1.4 3.4 L2.9 4.8 L5.8 1.8" stroke="#3a3a3a" stroke-width="1.1" fill="none"/></svg>
<div class="t" style="right:787.4px;top:173.55px;font-size:6.9px;color:#444;line-height:10px;transform-origin:100% 50%;transform:scaleX(0.891);">13687</div>
<div class="t" style="left:418px;top:173.55px;font-size:6.9px;color:#444;line-height:10px;transform-origin:0 50%;transform:scaleX(0.891);">Überschrift</div>
<div class="t" style="left:522.7px;top:173.55px;font-size:6.9px;color:#444;line-height:10px;transform-origin:0 50%;transform:scaleX(0.891);">Checked system logs and identified high CPU usage caused by Defende...</div>
<svg class="a" style="left:733px;top:173.90px" width="8.6" height="8.2" viewBox="0 0 10 10" preserveAspectRatio="none"><g transform="translate(0,0)"><path d="M5 0.2 V2" stroke="#aaa680" stroke-width="0.9"/><rect x="0.2" y="4.2" width="1.2" height="2.4" rx="0.5" fill="#aaa680"/><rect x="8.6" y="4.2" width="1.2" height="2.4" rx="0.5" fill="#aaa680"/><rect x="1.1" y="1.9" width="7.8" height="7.6" rx="2.2" fill="#f1efb6" stroke="#aaa680" stroke-width="0.6"/><ellipse cx="3.6" cy="5.3" rx="1.1" ry="1.4" fill="#1a1a1a"/><ellipse cx="6.4" cy="5.3" rx="1.1" ry="1.4" fill="#1a1a1a"/></g></svg>
<div class="a" style="left:297.3px;top:193.9px;width:886.2px;height:1px;background:#e6e6e6"></div>
<div class="a" style="left:329.3px;top:185.4px;width:7.5px;height:7.2px;border:1px solid #d9d9d9;border-radius:0.5px;box-sizing:border-box;background:#fff"></div>
<svg class="a" style="left:329.3px;top:185.60000000000002px" width="7.5" height="7.2" viewBox="0 0 7.5 7.2"><path d="M1.4 3.4 L2.9 4.8 L5.8 1.8" stroke="#3a3a3a" stroke-width="1.1" fill="none"/></svg>
<div class="t" style="right:787.4px;top:184.65px;font-size:6.9px;color:#444;line-height:10px;transform-origin:100% 50%;transform:scaleX(0.891);">13687</div>
<div class="t" style="left:418px;top:184.65px;font-size:6.9px;color:#444;line-height:10px;transform-origin:0 50%;transform:scaleX(0.891);">Überschrift</div>
<div class="t" style="left:522.7px;top:184.65px;font-size:6.9px;color:#444;line-height:10px;transform-origin:0 50%;transform:scaleX(0.891);">Analyse du système effectuée. Le service antivirus consommait beaucou...</div>
<svg class="a" style="left:733px;top:185.00px" width="8.6" height="8.2" viewBox="0 0 10 10" preserveAspectRatio="none"><g transform="translate(0,0)"><path d="M5 0.2 V2" stroke="#aaa680" stroke-width="0.9"/><rect x="0.2" y="4.2" width="1.2" height="2.4" rx="0.5" fill="#aaa680"/><rect x="8.6" y="4.2" width="1.2" height="2.4" rx="0.5" fill="#aaa680"/><rect x="1.1" y="1.9" width="7.8" height="7.6" rx="2.2" fill="#f1efb6" stroke="#aaa680" stroke-width="0.6"/><ellipse cx="3.6" cy="5.3" rx="1.1" ry="1.4" fill="#1a1a1a"/><ellipse cx="6.4" cy="5.3" rx="1.1" ry="1.4" fill="#1a1a1a"/></g></svg>
<div class="a" style="left:352.2px;top:83.4px;width:1px;height:111px;background:#e6e6e6"></div>
<div class="a" style="left:415.2px;top:83.4px;width:1px;height:111px;background:#e6e6e6"></div>
<div class="a" style="left:520.4px;top:83.4px;width:1px;height:111px;background:#e6e6e6"></div>
<div class="a" style="left:729.4px;top:83.4px;width:1px;height:111px;background:#e6e6e6"></div>
<div class="a" style="left:745.3px;top:83.4px;width:1px;height:111px;background:#e6e6e6"></div>
<div class="a" style="left:954.3px;top:83.4px;width:1px;height:111px;background:#e6e6e6"></div>
<div class="a" style="left:1007.3px;top:83.4px;width:1px;height:111px;background:#e6e6e6"></div>
<div class="a" style="left:1183.5px;top:67.5px;width:8.5px;height:366px;background:#fefefe"></div>
<div class="a" style="left:1184px;top:68.5px;width:8px;height:8px;background:#fff;border:1px solid #eee;box-sizing:border-box"></div>
<svg class="a" style="left:1186px;top:71px" width="5" height="3" viewBox="0 0 5 3"><path d="M0 2.6 L2.2 0.4 L4.4 2.6 Z" fill="#333"/></svg>
<div class="a" style="left:1184px;top:425.5px;width:8px;height:8px;background:#fff;border:1px solid #eee;box-sizing:border-box"></div>
<svg class="a" style="left:1186px;top:428px" width="5" height="3" viewBox="0 0 5 3"><path d="M0 0.4 L2.2 2.6 L4.4 0.4 Z" fill="#333"/></svg>
<div class="a" style="left:289.5px;top:434px;width:903px;height:1px;background:#d8d8d8"></div>
<svg class="a" style="left:295px;top:436.5px" width="14" height="13" viewBox="0 0 14 13"><circle cx="6.8" cy="6.3" r="5.5" fill="none" stroke="#c0503a" stroke-width="1.1"/><path d="M6.5 3.3 V6.8 H8.8" stroke="#666" stroke-width="0.8" fill="none"/></svg>
<div class="t" style="left:317.5px;top:439.10px;font-size:6.9px;color:#999;line-height:10px;transform-origin:0 50%;transform:scaleX(0.891);">-</div>
<div class="t" style="left:296px;top:457.60px;font-size:6.57px;color:#333;line-height:10px;transform-origin:0 50%;transform:scaleX(0.891);font-weight:bold;">Ergebnis der KI-Prüfung:</div>
<div class="t" style="left:432px;top:457.60px;font-size:6.57px;color:#333;line-height:10px;transform-origin:0 50%;transform:scaleX(0.891);font-weight:bold;">Beschreibung:</div>
<div class="t" style="left:746.5px;top:457.60px;font-size:6.57px;color:#333;line-height:10px;transform-origin:0 50%;transform:scaleX(0.891);font-weight:bold;">KI-Textvorschlag:</div>
<div class="t" style="left:1060.5px;top:457.60px;font-size:6.57px;color:#333;line-height:10px;transform-origin:0 50%;transform:scaleX(0.891);font-weight:bold;">Funktionen:</div>
<div class="a" style="left:296px;top:467px;width:131px;height:145px;border:1px solid #d0d0d0;box-sizing:border-box;background:#fff"></div>
<div class="a" style="left:432px;top:467px;width:310px;height:145px;border:1px solid #dcdcdc;box-sizing:border-box;background:#fff"></div>
<div class="a" style="left:746px;top:467px;width:309.5px;height:145px;border:1px solid #dcdcdc;box-sizing:border-box;background:#fff"></div>
<div class="t" style="left:299px;top:470.90px;font-size:6.9px;color:#444;line-height:10px;transform-origin:0 50%;transform:scaleX(0.891);">Keine Bewertung vorhanden</div>
<div class="a" style="left:1060.3px;top:468.1px;width:125.40000000000009px;height:12.5px;border:1px solid #dedede;box-sizing:border-box;background:#fbfbfb"></div>
<div class="a" style="left:1060.3px;top:482.6px;width:125.40000000000009px;height:12.699999999999989px;border:1px solid #dedede;box-sizing:border-box;background:#fbfbfb"></div>
<div class="a" style="left:1060.3px;top:499.5px;width:125.4px;height:1px;background:#e8e8e8"></div>
<div class="a" style="left:1060.3px;top:504.4px;width:125.40000000000009px;height:12.5px;border:1px solid #dedede;box-sizing:border-box;background:#fbfbfb"></div>
<div class="a" style="left:1060.3px;top:519.2px;width:125.40000000000009px;height:12.399999999999977px;border:1px solid #dedede;box-sizing:border-box;background:#fbfbfb"></div>
<div class="a" style="left:1060.3px;top:536px;width:125.4px;height:1px;background:#e8e8e8"></div>
<div class="a" style="left:1060.3px;top:541.4px;width:125.40000000000009px;height:12.399999999999977px;border:1px solid #dedede;box-sizing:border-box;background:#fbfbfb"></div>
<div class="a" style="left:1060.3px;top:556px;width:125.40000000000009px;height:12.700000000000045px;border:1px solid #dedede;box-sizing:border-box;background:#fbfbfb"></div>
<div class="t" style="left:1090.5px;top:470.20px;font-size:6.9px;color:#444;line-height:10px;transform-origin:0 50%;transform:scaleX(0.891);">Beschreibung mit KI prüfen</div>
<div class="t" style="left:1085px;top:484.60px;font-size:6.9px;color:#444;line-height:10px;transform-origin:0 50%;transform:scaleX(0.891);">Textvorschlag mit KI generieren</div>
<div class="t" style="left:1080px;top:506.30px;font-size:6.9px;color:#444;line-height:10px;transform-origin:0 50%;transform:scaleX(0.891);">Textvorschlag übernehmen (Num0)</div>
<div class="t" style="left:1090.5px;top:521.00px;font-size:6.9px;color:#444;line-height:10px;transform-origin:0 50%;transform:scaleX(0.891);">Beschreibung zurücksetzen</div>
<div class="t" style="left:1078.9px;top:543.20px;font-size:6.9px;color:#444;line-height:10px;transform-origin:0 50%;transform:scaleX(0.891);">Vorherige Beschreibung (Pfeil-Links)</div>
<div class="t" style="left:1078.9px;top:558.20px;font-size:6.9px;color:#444;line-height:10px;transform-origin:0 50%;transform:scaleX(0.891);">Nächste Beschreibung (Pfeil-Rechts)</div>
<svg class="a" style="left:1080px;top:470.5px" width="9" height="8" viewBox="0 0 9 8"><g transform="translate(0,0)"><circle cx="5" cy="3.2" r="2.9" fill="#f7c58f" stroke="#b86a20" stroke-width="0.9"/><path d="M3 5.2 L0.8 7.2" stroke="#333" stroke-width="1.3" stroke-linecap="round"/></g></svg>
<svg class="a" style="left:1074.5px;top:484px" width="9" height="10" viewBox="0 0 9 10"><g transform="translate(0,0)"><rect x="0.5" y="0.5" width="6.5" height="8" fill="#eef3fa" stroke="#7d97c0" stroke-width="0.8"/><path d="M2 3 H5.5 M2 4.5 H5.5" stroke="#b8c6dc" stroke-width="0.6"/><circle cx="6.7" cy="7.5" r="1.7" fill="#7cb65a"/></g></svg>
<svg class="a" style="left:1069.5px;top:506px" width="9" height="9" viewBox="0 0 9 9"><g transform="translate(0,0)"><rect x="0.3" y="1" width="5" height="7" fill="#e9c44a"/><rect x="1.5" y="0.2" width="2.6" height="1.5" fill="#8d8d8d"/><rect x="3" y="3.2" width="4.7" height="5.3" fill="#eef4fb" stroke="#8eaad0" stroke-width="0.6"/></g></svg>
<svg class="a" style="left:1079.5px;top:522.5px" width="9" height="6" viewBox="0 0 9 6"><g transform="translate(0,0)"><path d="M8.3 5.2 C7.6 2.0 4.6 1.4 2.6 3.2" stroke="#ef9c45" stroke-width="1.3" fill="none"/><path d="M0.4 1.6 L4.0 2.6 L1.4 5.4 Z" fill="#ef9c45"/></g></svg>
<svg class="a" style="left:1067.5px;top:543.7px" width="8" height="8" viewBox="0 0 8 8"><circle cx="4" cy="4" r="3.5" fill="#fff" stroke="#8ba6cb" stroke-width="0.75"/><path d="M6.1 4 H3.2" stroke="#3a67a3" stroke-width="1.1"/><path d="M1.7 4 L3.9 2.1 L3.9 5.9 Z" fill="#3a67a3"/></svg>
<svg class="a" style="left:1067.5px;top:558.6px" width="8" height="8" viewBox="0 0 8 8"><circle cx="4" cy="4" r="3.5" fill="#fff" stroke="#8ba6cb" stroke-width="0.75"/><path d="M1.9 4 H4.8" stroke="#3a67a3" stroke-width="1.1"/><path d="M6.3 4 L4.1 2.1 L4.1 5.9 Z" fill="#3a67a3"/></svg>
<div class="a" style="left:1060.3px;top:573.2px;width:7.2px;height:7px;border:1px solid #d2d2d2;box-sizing:border-box;background:#fff"></div>
<svg class="a" style="left:1060.3px;top:573.2px" width="7.2" height="7" viewBox="0 0 7.2 7"><path d="M1.4 3.4 L2.9 4.8 L5.8 1.8" stroke="#3a3a3a" stroke-width="1.1" fill="none"/></svg>
<div class="t" style="left:1070px;top:572.30px;font-size:6.9px;color:#444;line-height:10px;transform-origin:0 50%;transform:scaleX(0.891);">Keine Beschreibung - Überspringen</div>
<div class="a" style="left:1060.3px;top:586.9px;width:7.2px;height:7px;border:1px solid #d2d2d2;box-sizing:border-box;background:#fff"></div>
<svg class="a" style="left:1060.3px;top:586.9px" width="7.2" height="7" viewBox="0 0 7.2 7"><path d="M1.4 3.4 L2.9 4.8 L5.8 1.8" stroke="#3a3a3a" stroke-width="1.1" fill="none"/></svg>
<div class="t" style="left:1070px;top:586.00px;font-size:6.9px;color:#444;line-height:10px;transform-origin:0 50%;transform:scaleX(0.891);">Kein Textvorschlag - Überspringen</div>
<div class="a" style="left:1060.3px;top:600.1px;width:7.2px;height:7px;border:1px solid #d2d2d2;box-sizing:border-box;background:#fff"></div>
<div class="t" style="left:1070px;top:599.20px;font-size:6.9px;color:#444;line-height:10px;transform-origin:0 50%;transform:scaleX(0.891);">Nur ausgewählte Zeiteinträge</div>
<div class="a" style="left:289.5px;top:618px;width:903px;height:1px;background:#e4e4e4"></div>
<div class="a" style="left:1027.5px;top:624.3px;width:78.29999999999995px;height:12.200000000000045px;border:1px solid #dedede;box-sizing:border-box;background:#fbfbfb"></div>
<div class="a" style="left:1108.2px;top:624.3px;width:78.29999999999995px;height:12.200000000000045px;border:1px solid #dedede;box-sizing:border-box;background:#fbfbfb"></div>
<div class="t" style="left:1066.65px;top:626.00px;font-size:6.9px;color:#444;line-height:10px;transform-origin:0 50%;transform:scaleX(0.891) translateX(-50%);">Zurück</div>
<div class="t" style="left:1147.35px;top:626.00px;font-size:6.9px;color:#444;line-height:10px;transform-origin:0 50%;transform:scaleX(0.891) translateX(-50%);">Weiter</div>
<div class="a" style="left:697.6px;top:162.8px;width:71px;height:71px;border-radius:50%;border:2.6px solid rgba(242,150,75,0.62);background:rgba(245,155,80,0.4);box-sizing:border-box"></div>
<div class="a" style="left:1199px;top:0px;width:1px;height:656px;background:#50565e"></div>
<div class="a" style="left:0px;top:656px;width:1200px;height:14px;background:#106ebe;border-top:1px solid #0b5aa0;box-sizing:border-box"></div>
<div class="a" style="left:0px;top:669px;width:1200px;height:1px;background:#3a72a8"></div>
</body></html>
